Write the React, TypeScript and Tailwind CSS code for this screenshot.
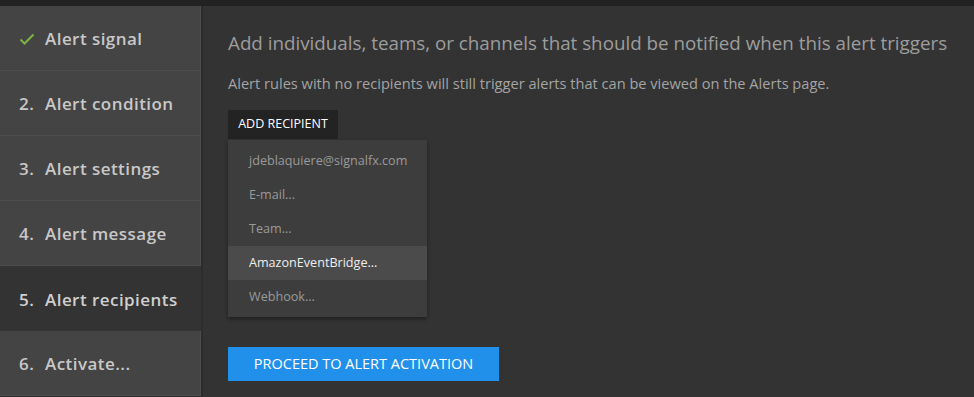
import React from "react";

const steps = [
  { num: "", label: "Alert signal", done: true },
  { num: "2.", label: "Alert condition" },
  { num: "3.", label: "Alert settings" },
  { num: "4.", label: "Alert message" },
  { num: "5.", label: "Alert recipients", active: true },
  { num: "6.", label: "Activate..." },
];

const options = [
  "jdeblaquiere@signalfx.com",
  "E-mail...",
  "Team...",
  "AmazonEventBridge...",
  "Webhook...",
];

const Check = () => (
  <svg width="16" height="13" viewBox="0 0 16 13">
    <path d="M1.5 6.5 L5.5 10.5 L14.5 1.5" fill="none" stroke="#7cb342" strokeWidth="2" />
  </svg>
);

export default function App() {
  return (
    <div
      className="w-[974px] h-[397px] overflow-hidden bg-[#333333] flex flex-col"
      style={{ fontFamily: '"Open Sans", "Noto Sans", sans-serif' }}
    >
      <div className="h-[6px] bg-[#222222] shrink-0" />
      <div className="flex flex-1 min-h-0">
        {/* Steps */}
        <div className="w-[203px] shrink-0 bg-[#2c2c2c] flex flex-col">
          {steps.map((s) => (
            <div
              key={s.label}
              className={`h-[65px] w-[201px] shrink-0 flex items-center pl-[19px] pt-[2px] text-[17px] font-semibold tracking-[0.45px] whitespace-nowrap ${
                s.active
                  ? "bg-[#333333] text-[#cfcfcf]"
                  : "bg-[#444444] border-b border-r border-[#4d4d4d] text-[#c8c8c8]"
              }`}
            >
              <span className="w-[26px] flex items-center">
                {s.done ? <Check /> : s.num}
              </span>
              {s.label}
            </div>
          ))}
        </div>

        {/* Content */}
        <div className="flex-1 pl-[25px] pt-[25px]">
          <h1 className="text-[18.8px] leading-[24px] text-[#9d9d9d] font-normal whitespace-nowrap">
            Add individuals, teams, or channels that should be notified when this alert triggers
          </h1>
          <p className="mt-[18px] text-[14.6px] leading-[20px] text-[#a4a4a4] whitespace-nowrap">
            Alert rules with no recipients will still trigger alerts that can be viewed on the Alerts page.
          </p>
          <button className="mt-[17px] h-[29px] w-[110px] bg-[#232323] text-white text-[12.5px] font-normal flex items-center justify-center">
            ADD RECIPIENT
          </button>
          <div className="mt-[1px] w-[199px] bg-[#3d3d3d] pt-[4px] pb-[3px] shadow-[0_2px_4px_rgba(0,0,0,0.4)]">
            {options.map((o) => (
              <div
                key={o}
                className={`h-[34px] flex items-center pl-[21px] text-[12.6px] ${
                  o.startsWith("Amazon") ? "bg-[#4b4b4b] text-[#eeeeee]" : "text-[#9a9a9a]"
                }`}
              >
                {o}
              </div>
            ))}
          </div>
          <button className="mt-[30px] h-[34px] w-[271px] bg-[#2190ea] text-white text-[14.5px] flex items-center justify-center">
            PROCEED TO ALERT ACTIVATION
          </button>
        </div>
      </div>
    </div>
  );
}
